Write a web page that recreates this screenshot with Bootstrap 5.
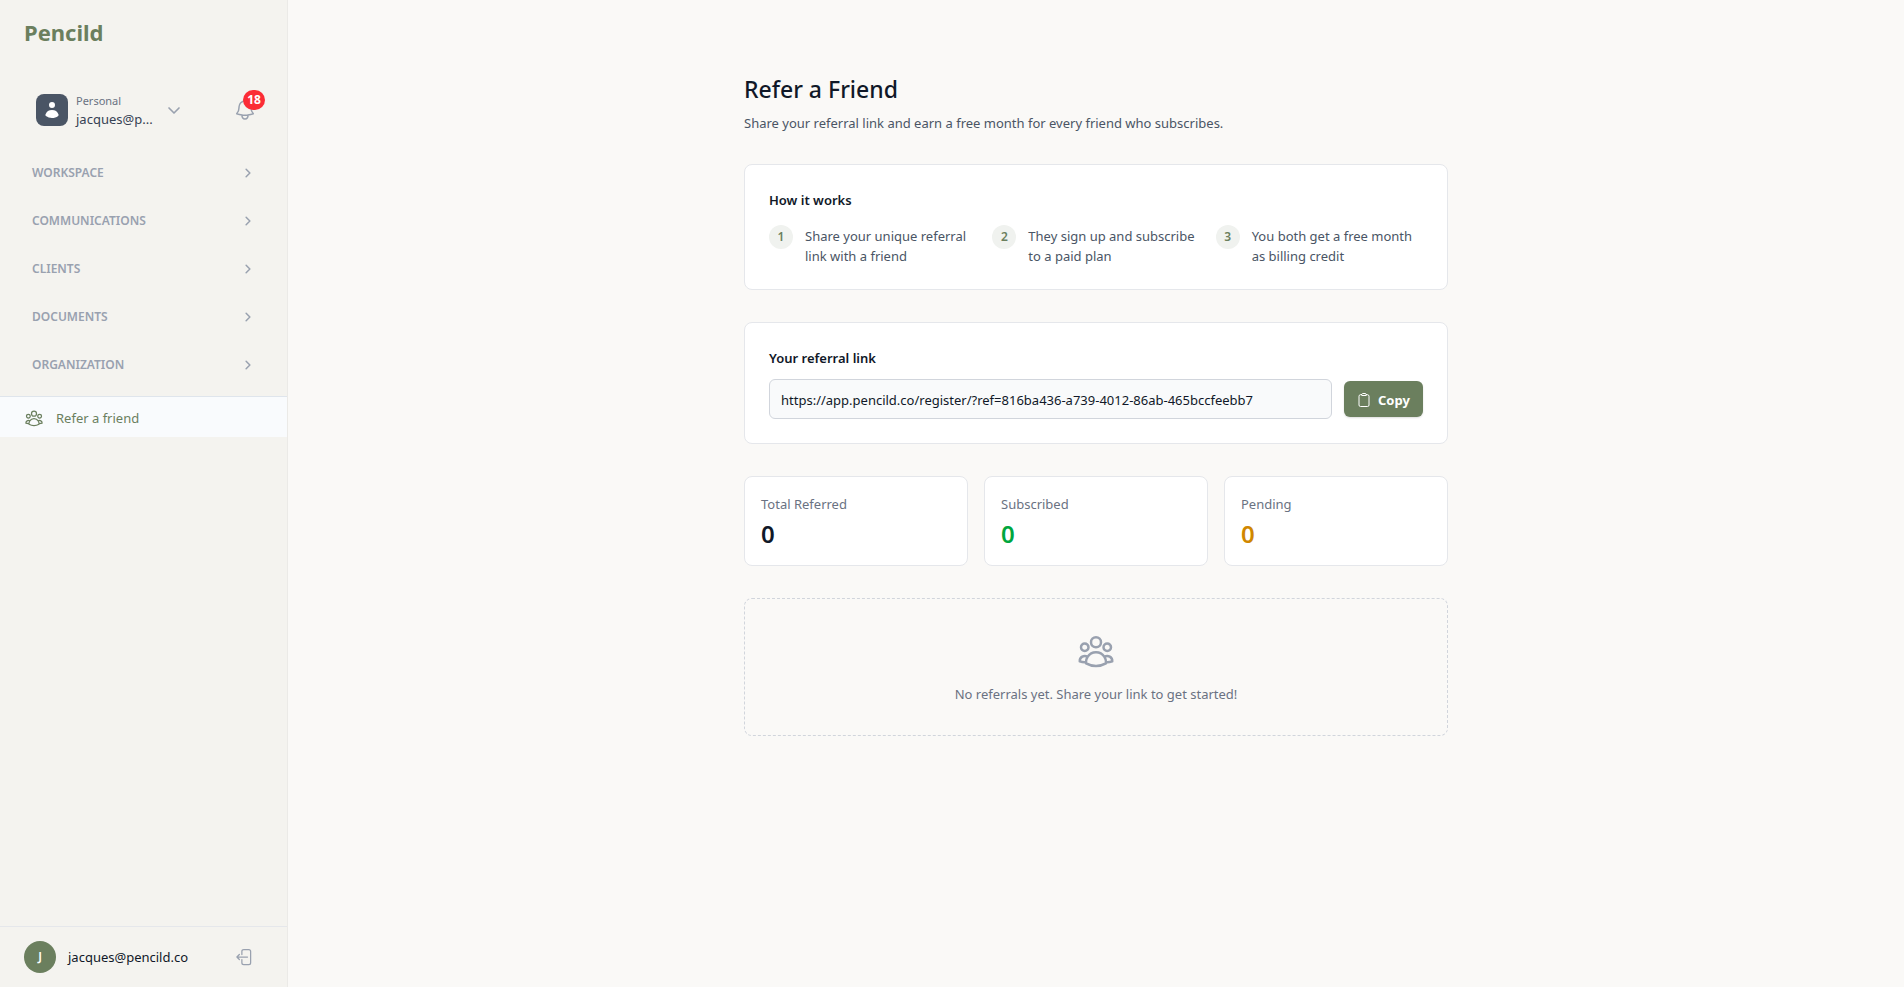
<!DOCTYPE html>
<html lang="en">
<head>
<meta charset="utf-8">
<meta name="viewport" content="width=device-width, initial-scale=1">
<title>Refer a Friend · Pencild</title>
<link rel="stylesheet" href="https://cdn.jsdelivr.net/npm/bootstrap@5.3.0/dist/css/bootstrap.min.css">
<style>
:root { --sage: #6b7f5e; --ink: #101828; --slate: #4a5565; --muted: #6a7282; --faint: #99a1af; --line: #e5e7eb; }
body { font-family: "Noto Sans", sans-serif; font-size: 13px; line-height: 20px; color: var(--ink); background: #faf9f7; }
svg { fill: none; stroke: currentColor; stroke-width: 1.5; stroke-linecap: round; stroke-linejoin: round; flex: none; }
.sidebar { width: 288px; background: #f4f3ef; border-right: 1px solid #ebeae7; }
.brand { font-size: 22px; line-height: 32px; font-weight: 700; color: var(--sage); text-decoration: none; padding: 16px 24px; }
.account { padding: 28px 30px 20px 36px; }
.account-btn { width: 146px; font-size: 13px; line-height: 20px; color: var(--muted); }
.account-icon { width: 32px; height: 32px; flex: none; border-radius: 8px; background: var(--slate); color: #fff; }
.account-icon svg { fill: #fff; stroke: none; }
.account-text { margin: 1px 0 -1px; }
.account-kind { font-size: 11px; line-height: 16px; }
.account-name { color: #364153; }
.faint { color: var(--faint); }
.count { left: 10px; top: -8px; height: 20px; min-width: 22px; font-size: 12px; line-height: 20px; font-weight: 700; color: #fff; background: #fb2c36; }
.section-btn { font-size: 12px; line-height: 16px; font-weight: 600; color: var(--faint); padding: 17px 33px 15px 32px; }
.section-btn svg { stroke-width: 3; }
.refer { height: 41px; padding: 1px 24px 0; gap: 12px; border-top: 1px solid #dfe5ec; background: #f9fbfd; color: var(--sage); text-decoration: none; }
.side-foot { border-top: 1px solid var(--line); padding: 14px 32px 14px 24px; gap: 12px; }
.avatar { width: 32px; height: 32px; background: var(--sage); color: #fff; font-size: 12px; font-weight: 600; }
.content { max-width: 768px; padding: 73px 32px 32px; gap: 32px; }
h1 { font-size: 23px; line-height: 32px; font-weight: 500; margin: 0 0 8px; }
.heading { font-size: 13px; line-height: 18px; padding-top: 2px; font-weight: 600; }
.intro, .step-text { color: var(--slate); }
.intro { margin: 0 0 -1px; }
.panel { background: #fff; border: 1px solid var(--line); border-radius: 8px; }
.tri { display: grid; grid-template-columns: repeat(3, 1fr); gap: 16px; }
.step { gap: 12px; }
.step-text { margin: 1px 0 -1px; }
.step-no { width: 24px; height: 24px; flex: none; background: #f0f2ef; color: var(--sage); font-size: 12px; font-weight: 600; }
.link-row { gap: 12px; }
.link-box { height: 40px; min-width: 0; padding: 2px 11px 0; color: var(--ink); background: #f9fafb; border: 1px solid #d1d5dc; border-radius: 6px; }
.copy { height: 36px; min-width: 79px; padding: 1px 12px 0; gap: 6px; font-size: 13px; line-height: 20px; font-weight: 700; color: #fff; background: var(--sage); border: 0; border-radius: 6px; box-shadow: 0 1px 2px #0002; }
.copy:hover { color: #fff; background: #5c6e50; }
.stat-name { line-height: 18px; padding-top: 2px; color: var(--muted); }
.stat-num { font-size: 24px; line-height: 30px; padding-top: 2px; font-weight: 600; }
.won { color: #00a63e; }
.waiting { color: #d08700; }
.empty { border: 1px dashed #d1d5dc; border-radius: 8px; padding: 32px; gap: 12px; color: var(--muted); }
.empty p { line-height: 18px; padding-top: 2px; }
</style>
</head>
<body>
<svg class="d-none">
<symbol id="group" viewBox="0 0 24 24"><path d="M18 18.72a9.094 9.094 0 0 0 3.741-.479 3 3 0 0 0-4.682-2.72m.94 3.198.001.031c0 .225-.012.447-.037.666A11.944 11.944 0 0 1 12 21c-2.17 0-4.207-.576-5.963-1.584A6.062 6.062 0 0 1 6 18.719m12 0a5.971 5.971 0 0 0-.941-3.197m0 0A5.995 5.995 0 0 0 12 12.75a5.995 5.995 0 0 0-5.058 2.772m0 0a3 3 0 0 0-4.681 2.72 8.986 8.986 0 0 0 3.74.477m.94-3.197a5.971 5.971 0 0 0-.94 3.197M15 6.75a3 3 0 1 1-6 0 3 3 0 0 1 6 0Zm6 3a2.25 2.25 0 1 1-4.5 0 2.25 2.25 0 0 1 4.5 0Zm-13.5 0a2.25 2.25 0 1 1-4.5 0 2.25 2.25 0 0 1 4.5 0Z"/></symbol>
<symbol id="right" viewBox="0 0 24 24"><path d="m8.25 4.5 7.5 7.5-7.5 7.5"/></symbol>
</svg>
<div class="d-flex min-vh-100">
<aside class="sidebar d-flex flex-column flex-shrink-0">
<a class="brand" href="#">Pencild</a>
<div class="account d-flex align-items-center justify-content-between">
<button class="account-btn btn p-0 border-0 d-flex align-items-center gap-2 text-start" type="button">
<span class="account-icon d-flex align-items-center justify-content-center"><svg width="20" height="20" viewBox="0 0 20 20"><path d="M10 8a3 3 0 1 0 0-6 3 3 0 0 0 0 6ZM3.465 14.493a1.23 1.23 0 0 0 .41 1.412A9.957 9.957 0 0 0 10 18c2.31 0 4.438-.784 6.131-2.1.43-.333.604-.903.408-1.41a7.002 7.002 0 0 0-13.074.003Z"/></svg></span>
<span class="account-text flex-grow-1 d-flex flex-column"><span class="account-kind">Personal</span><span class="account-name">jacques@p...</span></span>
<svg class="faint" width="16" height="16" viewBox="0 0 24 24"><path stroke-width="2.5" d="m19.5 9-7.500 7.500-7.500-7.500"/></svg>
</button>
<button class="faint btn p-0 border-0 position-relative d-flex" type="button" aria-label="Notifications">
<svg width="24" height="24" viewBox="0 0 24 24"><path d="M14.857 17.082a23.848 23.848 0 0 0 5.454-1.31A8.967 8.967 0 0 1 18 9.75V9A6 6 0 0 0 6 9v.75a8.967 8.967 0 0 1-2.312 6.022c1.733.64 3.56 1.085 5.455 1.31m5.714 0a24.255 24.255 0 0 1-5.714 0m5.714 0a3 3 0 1 1-5.714 0"/></svg>
<span class="count position-absolute rounded-pill text-center">18</span>
</button>
</div>
<nav class="d-flex flex-column" aria-label="Main">
<button class="section-btn btn border-0 d-flex align-items-center justify-content-between" type="button">WORKSPACE<svg width="12" height="12"><use href="#right"/></svg></button>
<button class="section-btn btn border-0 d-flex align-items-center justify-content-between" type="button">COMMUNICATIONS<svg width="12" height="12"><use href="#right"/></svg></button>
<button class="section-btn btn border-0 d-flex align-items-center justify-content-between" type="button">CLIENTS<svg width="12" height="12"><use href="#right"/></svg></button>
<button class="section-btn btn border-0 d-flex align-items-center justify-content-between" type="button">DOCUMENTS<svg width="12" height="12"><use href="#right"/></svg></button>
<button class="section-btn btn border-0 d-flex align-items-center justify-content-between" type="button">ORGANIZATION<svg width="12" height="12"><use href="#right"/></svg></button>
<a class="refer d-flex align-items-center mt-2" href="#"><svg width="20" height="20"><use href="#group"/></svg>Refer a friend</a>
</nav>
<div class="side-foot d-flex align-items-center mt-auto">
<span class="avatar rounded-circle d-flex align-items-center justify-content-center">J</span>
<span class="flex-grow-1">jacques@pencild.co</span>
<button class="faint btn p-0 border-0 d-flex" type="button" aria-label="Sign out"><svg width="20" height="20" viewBox="0 0 24 24"><path d="M8.25 9V5.25A2.25 2.25 0 0 1 10.5 3h6a2.25 2.25 0 0 1 2.25 2.25v13.5A2.25 2.25 0 0 1 16.5 21h-6a2.25 2.25 0 0 1-2.25-2.25V15m-3 0-3-3m0 0 3-3m-3 3H15"/></svg></button>
</div>
</aside>
<main class="flex-grow-1">
<div class="content mx-auto d-flex flex-column">
<header>
<h1>Refer a Friend</h1>
<p class="intro">Share your referral link and earn a free month for every friend who subscribes.</p>
</header>
<section class="panel p-4">
<h2 class="heading mb-3">How it works</h2>
<div class="tri">
<div class="step d-flex"><span class="step-no rounded-circle d-flex align-items-center justify-content-center">1</span><span class="step-text">Share your unique referral link with a friend</span></div>
<div class="step d-flex"><span class="step-no rounded-circle d-flex align-items-center justify-content-center">2</span><span class="step-text">They sign up and subscribe to a paid plan</span></div>
<div class="step d-flex"><span class="step-no rounded-circle d-flex align-items-center justify-content-center">3</span><span class="step-text">You both get a free month as billing credit</span></div>
</div>
</section>
<section class="panel p-4 d-flex flex-column link-row">
<label class="heading" for="link">Your referral link</label>
<div class="link-row d-flex align-items-center">
<input class="link-box flex-grow-1" id="link" type="text" readonly value="https://app.pencild.co/register/?ref=816ba436-a739-4012-86ab-465bccfeebb7">
<button class="copy btn d-flex align-items-center" type="button"><svg width="16" height="16" viewBox="0 0 24 24"><path d="M15.666 3.888A2.25 2.25 0 0 0 13.5 2.25h-3c-1.03 0-1.9.693-2.166 1.638m7.332 0c.055.194.084.4.084.612v0a.75.75 0 0 1-.75.75H9a.75.75 0 0 1-.75-.75v0c0-.212.03-.418.084-.612m7.332 0c.646.049 1.288.11 1.927.184 1.1.128 1.907 1.077 1.907 2.185V19.5a2.25 2.25 0 0 1-2.25 2.25H6.75A2.25 2.25 0 0 1 4.5 19.5V6.257c0-1.108.806-2.057 1.907-2.185a48.208 48.208 0 0 1 1.927-.184"/></svg>Copy</button>
</div>
</section>
<section class="tri">
<div class="panel p-3"><div class="stat-name mb-1">Total Referred</div><div class="stat-num">0</div></div>
<div class="panel p-3"><div class="stat-name mb-1">Subscribed</div><div class="stat-num won">0</div></div>
<div class="panel p-3"><div class="stat-name mb-1">Pending</div><div class="stat-num waiting">0</div></div>
</section>
<section class="empty d-flex flex-column align-items-center">
<svg class="faint" width="40" height="40"><use href="#group"/></svg>
<p class="mb-0">No referrals yet. Share your link to get started!</p>
</section>
</div>
</main>
</div>
<script src="https://cdn.jsdelivr.net/npm/bootstrap@5.3.0/dist/js/bootstrap.bundle.min.js"></script>
</body>
</html>
